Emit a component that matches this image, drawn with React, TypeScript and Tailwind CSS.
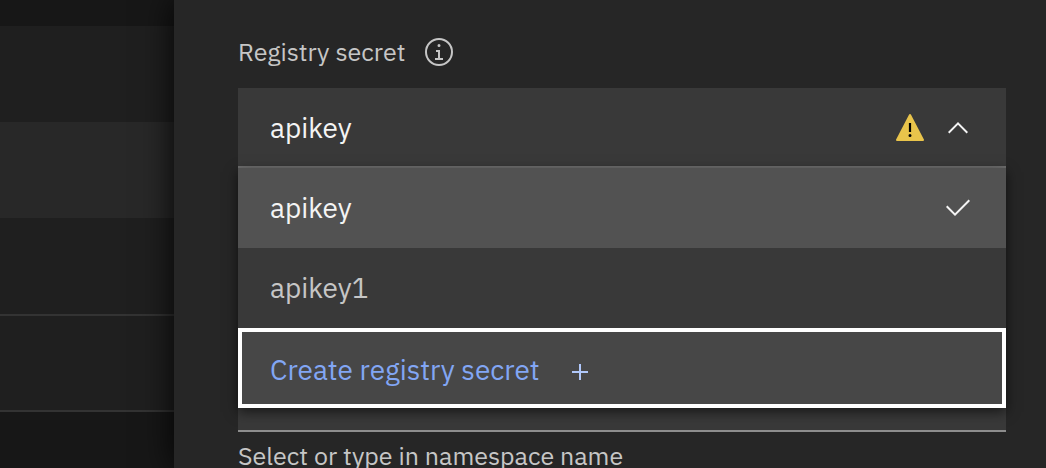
import React, { useState } from "react";

const secrets = ["apikey", "apikey1"];

function InfoIcon() {
  return (
    <svg viewBox="0 0 32 32" className="size-8" fill="currentColor" aria-hidden="true">
      <path d="M17 22v-8h-4v2h2v6h-3v2h8v-2zM16 8a1.5 1.5 0 1 0 1.5 1.5A1.5 1.5 0 0 0 16 8z" />
      <path d="M16 30a14 14 0 1 1 14-14 14 14 0 0 1-14 14zm0-26a12 12 0 1 0 12 12A12 12 0 0 0 16 4z" />
    </svg>
  );
}

function WarningIcon() {
  return (
    <svg viewBox="0 0 32 32" className="size-8" aria-hidden="true">
      <path d="M16 2a1 1 0 0 1 .9.5l13 25A1 1 0 0 1 29 29H3a1 1 0 0 1-.9-1.5l13-25A1 1 0 0 1 16 2z" fill="#e9c44b" />
      <path d="M14.9 11h2.2v9h-2.2zM16 22a1.5 1.5 0 1 1 0 3 1.5 1.5 0 0 1 0-3z" fill="#000" />
    </svg>
  );
}

function ChevronUpIcon() {
  return (
    <svg viewBox="0 0 32 32" className="size-8" fill="#f4f4f4" aria-hidden="true">
      <path d="M16 10 26 20l-1.4 1.4L16 12.8l-8.6 8.6L6 20z" />
    </svg>
  );
}

function CheckIcon() {
  return (
    <svg viewBox="0 0 32 32" className="size-8" fill="#f4f4f4" aria-hidden="true">
      <path d="m13 24-9-9 1.41-1.41L13 21.17 26.59 7.59 28 9z" />
    </svg>
  );
}

function PlusIcon() {
  return (
    <svg viewBox="0 0 32 32" className="size-8" fill="#b0c8fb" aria-hidden="true">
      <path d="M17 15V8h-2v7H8v2h7v7h2v-7h7v-2z" />
    </svg>
  );
}

function Rows() {
  return (
    <div className="w-[174px] shrink-0 bg-[#171717]" aria-hidden="true">
      <div className="h-[26px]" />
      <div className="h-24 bg-[#1f1f1f]" />
      <div className="h-24 bg-[#282828]" />
      <div className="h-[98px] border-b-2 border-[#333333] bg-[#1f1f1f]" />
      <div className="h-24 border-b-2 border-[#333333] bg-[#1f1f1f]" />
    </div>
  );
}

export default function App() {
  const [selected, setSelected] = useState("apikey");

  return (
    <div className="flex h-screen overflow-hidden bg-[#171717] font-['IBM_Plex_Sans','Noto_Sans',sans-serif]">
      <Rows />
      <main className="min-w-0 grow bg-[#262626] pt-9 pr-10 pl-16 shadow-[0_0_32px_rgba(0,0,0,0.9)]">
        <div className="flex h-8 items-center gap-[18px] text-[#c6c6c6]">
          <span id="secret-label" className="text-[25px]">Registry secret</span>
          <button type="button" aria-label="About registry secrets">
            <InfoIcon />
          </button>
        </div>

        <div className="relative mt-5">
          <button
            type="button"
            aria-labelledby="secret-label"
            aria-haspopup="listbox"
            aria-expanded="true"
            className="flex h-20 w-full items-center gap-4 bg-[#393939] px-8 text-[28px] text-[#f4f4f4] shadow-[inset_0_-2px_#6f6f6f]"
          >
            <span className="grow text-left">{selected}</span>
            <WarningIcon />
            <ChevronUpIcon />
          </button>

          <div className="absolute inset-x-0 top-full z-10 bg-[#393939] shadow-[0_4px_12px_rgba(0,0,0,0.6)]">
            <ul role="listbox" aria-labelledby="secret-label">
              {secrets.map((name) => (
                <li
                  key={name}
                  role="option"
                  aria-selected={name === selected}
                  onClick={() => setSelected(name)}
                  className={
                    name === selected
                      ? "flex h-20 items-center justify-between bg-[#525252] px-8 text-[28px] text-[#f4f4f4]"
                      : "flex h-20 items-center justify-between px-8 text-[28px] text-[#c6c6c6]"
                  }
                >
                  {name}
                  {name === selected && <CheckIcon />}
                </li>
              ))}
            </ul>
            <button
              type="button"
              className="flex h-20 w-full items-end gap-6 border-4 border-white bg-[#474747] px-7 pb-4 text-[28px] leading-9 text-[#82a6f4]"
            >
              Create registry secret
              <PlusIcon />
            </button>
          </div>
        </div>

        <input
          type="text"
          aria-label="Namespace"
          aria-describedby="namespace-help"
          className="mt-46 block h-20 w-full border-b-2 border-[#8d8d8d] bg-[#393939] px-8 text-[28px] text-[#f4f4f4]"
        />
        <p id="namespace-help" className="mt-2 text-[25px] leading-8 whitespace-nowrap text-[#c6c6c6]">
          Select or type in namespace name
        </p>
      </main>
    </div>
  );
}
